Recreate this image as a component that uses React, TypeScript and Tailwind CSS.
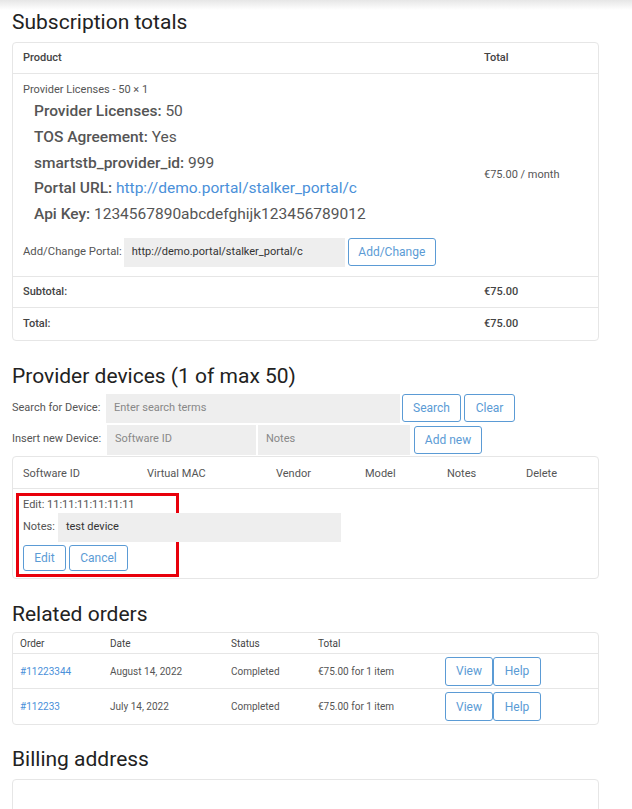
import React from "react";

const btn =
  "border border-[#5b9bd5] text-[#5b9bd5] rounded-[3px] bg-white text-[12px] flex items-center justify-center";

export default function App() {
  return (
    <div className="w-[632px] min-h-[809px] bg-white text-[#333] font-['Roboto',sans-serif] relative overflow-hidden">
      <div className="h-[10px] bg-gradient-to-b from-[#e6e6e6] to-white" />
      <div className="px-[12px] pr-[33px]">
        <h2 className="text-[21px] leading-[22px] mt-[1px] h-[31px] text-[#222]">Subscription totals</h2>
        <div className="border border-[#e6e6e6] rounded-[4px] text-[11px] text-[#555]">
          <div className="flex h-[31px] items-center border-b border-[#e6e6e6] font-medium text-[#444]">
            <div className="flex-1 pl-[10px]">Product</div>
            <div className="w-[114px]">Total</div>
          </div>
          <div className="flex border-b border-[#e6e6e6] h-[203px]">
            <div className="flex-1 pl-[10px] pt-[9px]">
              <div className="leading-[14px]">Provider Licenses - 50 × 1</div>
              <div className="pl-[11px] pt-[2px] text-[15.5px] leading-[25.8px] text-[#555]">
                <div><span className="font-medium">Provider Licenses:</span> 50</div>
                <div><span className="font-medium">TOS Agreement:</span> Yes</div>
                <div><span className="font-medium">smartstb_provider_id:</span> 999</div>
                <div><span className="font-medium">Portal URL:</span> <span className="text-[#4a90d9]">http://demo.portal/stalker_portal/c</span></div>
                <div><span className="font-medium">Api Key:</span> 1234567890abcdefghijk123456789012</div>
              </div>
              <div className="flex items-center mt-[10px]">
                <span className="mr-[2px] text-[11.3px]">Add/Change Portal:</span>
                <div className="w-[221px] h-[29px] bg-[#eeeeee] flex items-center pl-[8px] text-[#333]">http://demo.portal/stalker_portal/c</div>
                <div className={btn + " w-[88px] h-[28px] ml-[3px]"}>Add/Change</div>
              </div>
            </div>
            <div className="w-[114px] flex items-center">€75.00 / month</div>
          </div>
          <div className="flex h-[31px] items-center border-b border-[#e6e6e6] font-medium text-[#444]">
            <div className="flex-1 pl-[10px]">Subtotal:</div>
            <div className="w-[114px]">€75.00</div>
          </div>
          <div className="flex h-[32px] items-center font-medium text-[#444]">
            <div className="flex-1 pl-[10px]">Total:</div>
            <div className="w-[114px]">€75.00</div>
          </div>
        </div>

        <h2 className="text-[21px] leading-[22px] mt-[24px] h-[28px] text-[#222]">Provider devices (1 of max 50)</h2>
        <div className="flex items-center text-[11px] text-[#555] h-[30px]">
          <span className="w-[94px]">Search for Device:</span>
          <div className="w-[294px] h-[29px] bg-[#eeeeee] flex items-center pl-[8px] text-[#888]">Enter search terms</div>
          <div className={btn + " w-[59px] h-[28px] ml-[2px]"}>Search</div>
          <div className={btn + " w-[51px] h-[28px] ml-[3px]"}>Clear</div>
        </div>
        <div className="flex items-center text-[11px] text-[#555] h-[31px] mt-[1px]">
          <span className="w-[95px]">Insert new Device:</span>
          <div className="w-[149px] h-[30px] bg-[#eeeeee] flex items-center pl-[8px] text-[#888]">Software ID</div>
          <div className="w-[152px] h-[30px] bg-[#eeeeee] flex items-center pl-[8px] text-[#888] ml-[2px]">Notes</div>
          <div className={btn + " w-[68px] h-[28px] ml-[4px]"}>Add new</div>
        </div>
        <div className="border border-[#e6e6e6] rounded-[4px] text-[11px] text-[#555] mt-[1px] h-[123px]">
          <div className="grid grid-cols-[124px_129px_89px_82px_79px_1fr] h-[32px] pt-[3px] items-center border-b border-[#e6e6e6] pl-[10px] text-[#555]">
            <div>Software ID</div>
            <div>Virtual MAC</div>
            <div>Vendor</div>
            <div>Model</div>
            <div>Notes</div>
            <div>Delete</div>
          </div>
          <div className="pl-[3px] pt-[4px]">
            <div className="w-[163px] h-[84px] border-[3px] border-[#e8000b] pl-[4px] pt-[1px] overflow-visible">
              <div className="leading-[14px] pt-[1px]">Edit: 11:11:11:11:11:11</div>
              <div className="flex items-center mt-[1px] w-[330px]">
                <span className="mr-[3px]">Notes:</span>
                <div className="w-[283px] h-[29px] bg-[#eeeeee] flex items-center pl-[8px] text-[#333]">test device</div>
              </div>
              <div className="flex mt-[3px]">
                <div className={btn + " w-[43px] h-[26px]"}>Edit</div>
                <div className={btn + " w-[59px] h-[26px] ml-[3px]"}>Cancel</div>
              </div>
            </div>
          </div>
        </div>

        <h2 className="text-[21px] leading-[22px] mt-[24px] h-[29px] text-[#222]">Related orders</h2>
        <div className="border border-[#e6e6e6] rounded-[4px] text-[11px] text-[#555]">
          <div className="grid grid-cols-[90px_121px_87px_1fr] h-[21px] items-center border-b border-[#e6e6e6] pl-[7px] text-[10px] text-[#444]">
            <div>Order</div>
            <div>Date</div>
            <div>Status</div>
            <div>Total</div>
          </div>
          {[
            ["#11223344", "August 14, 2022"],
            ["#112233", "July 14, 2022"],
          ].map(([o, d], i) => (
            <div key={o} className={"grid grid-cols-[90px_121px_87px_127px_1fr] h-[35px] items-center pl-[7px] text-[10px] " + (i === 0 ? "border-b border-[#e6e6e6]" : "")}>
              <div className="text-[#4a90d9]">{o}</div>
              <div>{d}</div>
              <div>Completed</div>
              <div>€75.00 for 1 item</div>
              <div className="flex">
                <div className={btn + " w-[48px] h-[29px]"}>View</div>
                <div className={btn + " w-[48px] h-[29px]"}>Help</div>
              </div>
            </div>
          ))}
        </div>

        <h2 className="text-[21px] leading-[22px] mt-[23px] h-[31px] text-[#222]">Billing address</h2>
        <div className="border border-[#e6e6e6] rounded-[4px] h-[60px]" />
      </div>
    </div>
  );
}
